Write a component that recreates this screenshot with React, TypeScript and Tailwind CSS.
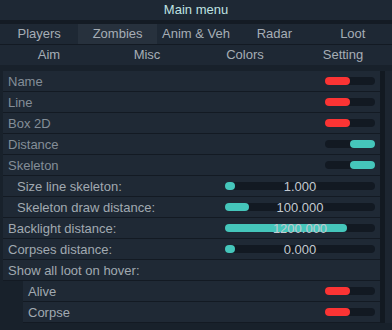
import React from 'react'

type Row =
  | { kind: 'toggle'; label: string; on: boolean; indent?: number; dim?: boolean }
  | { kind: 'slider'; label: string; value: string; fill: number; indent?: number; dim?: boolean }
  | { kind: 'label'; label: string; indent?: number; dim?: boolean }

const rows: Row[] = [
  { kind: 'toggle', label: 'Name', on: false, dim: true },
  { kind: 'toggle', label: 'Line', on: false, dim: true },
  { kind: 'toggle', label: 'Box 2D', on: false, dim: true },
  { kind: 'toggle', label: 'Distance', on: true, dim: true },
  { kind: 'toggle', label: 'Skeleton', on: true, dim: true },
  { kind: 'slider', label: 'Size line skeleton:', value: '1.000', fill: 10, indent: 1 },
  { kind: 'slider', label: 'Skeleton draw distance:', value: '100.000', fill: 24, indent: 1 },
  { kind: 'slider', label: 'Backlight distance:', value: '1200.000', fill: 122 },
  { kind: 'slider', label: 'Corpses distance:', value: '0.000', fill: 10 },
  { kind: 'label', label: 'Show all loot on hover:' },
  { kind: 'toggle', label: 'Alive', on: false, indent: 2 },
  { kind: 'toggle', label: 'Corpse', on: false, indent: 2 },
]

const tabsTop = ['Players', 'Zombies', 'Anim & Veh', 'Radar', 'Loot']
const tabsBottom = ['Aim', 'Misc', 'Colors', 'Setting']

function Toggle({ on }: { on: boolean }) {
  return (
    <div className="flex h-[8px] w-[50px] rounded-full bg-[#121922]">
      {on ? (
        <div className="ml-auto h-full w-[25px] rounded-full bg-[#45c6bb]" />
      ) : (
        <div className="h-full w-[25px] rounded-full bg-[#fb3434]" />
      )}
    </div>
  )
}

function Slider({ value, fill }: { value: string; fill: number }) {
  return (
    <div className="relative h-[8px] w-[150px] rounded-full bg-[#121922]">
      <div className="h-full rounded-full bg-[#45c6bb]" style={{ width: fill }} />
      <span className="absolute inset-0 flex items-center justify-center text-[13px] leading-none text-[#c3cad1]">
        {value}
      </span>
    </div>
  )
}

function SettingRow({ row }: { row: Row }) {
  const indent = row.indent ?? 0
  return (
    <div
      className={
        'flex h-[21px] items-center border-b border-[#131a23] bg-[#1f2935] pr-[5px] ' +
        (indent === 2 ? 'ml-[20px] pl-[5px]' : indent === 1 ? 'pl-[14px]' : 'pl-[5px]')
      }
    >
      <span
        className={
          'flex-1 text-[13px] leading-none ' + (row.dim ? 'text-[#848e98]' : 'text-[#a1a9b1]')
        }
      >
        {row.label}
      </span>
      {row.kind === 'toggle' && <Toggle on={row.on} />}
      {row.kind === 'slider' && <Slider value={row.value} fill={row.fill} />}
    </div>
  )
}

export default function App() {
  return (
    <div
      className="flex h-[330px] w-[392px] flex-col overflow-hidden bg-[#18212b]"
      style={{ fontFamily: '"Liberation Sans", Arial, sans-serif' }}
    >
      {/* Title */}
      <div className="flex h-[20px] items-center justify-center bg-[#1e2834] text-[13px] text-[#bfe2e2]">
        Main menu
      </div>
      <div className="h-[4px] bg-[#141b24]" />

      {/* Tabs */}
      <div className="grid h-[20px] grid-cols-5 bg-[#1e2834]">
        {tabsTop.map((t) => (
          <div
            key={t}
            className={
              'flex items-center justify-center text-[13px] text-[#a6aeb6] ' +
              (t === 'Zombies' ? 'bg-[#27313d]' : '')
            }
          >
            {t}
          </div>
        ))}
      </div>
      <div className="h-[1px] bg-[#131a23]" />
      <div className="grid h-[20px] grid-cols-4 bg-[#1e2834]">
        {tabsBottom.map((t) => (
          <div key={t} className="flex items-center justify-center text-[13px] text-[#a6aeb6]">
            {t}
          </div>
        ))}
      </div>

      <div className="h-[6px]" />

      {/* Settings list */}
      <div className="flex">
        <div className="ml-[3px] w-[377px]">
          {rows.map((r) => (
            <SettingRow key={r.label} row={r} />
          ))}
        </div>
        <div className="w-[5px] bg-[#121921]" />
        <div className="flex-1 bg-[#1c2530]" />
      </div>
    </div>
  )
}
